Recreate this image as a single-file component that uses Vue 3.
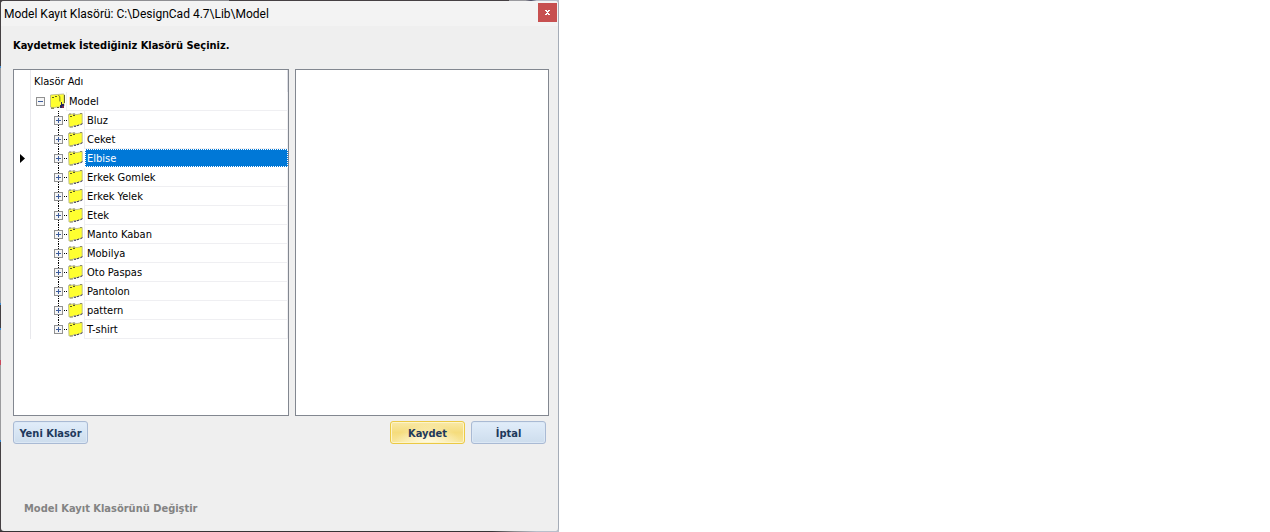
<script setup>
import { ref } from 'vue'

const folders = ['Bluz', 'Ceket', 'Elbise', 'Erkek Gomlek', 'Erkek Yelek', 'Etek', 'Manto Kaban', 'Mobilya', 'Oto Paspas', 'Pantolon', 'pattern', 'T-shirt']
const selected = ref('Elbise')
</script>

<template>
  <main class="frame">
    <section class="dialog" role="dialog" aria-labelledby="title">
      <header class="titlebar">
        <h1 id="title">Model Kayıt Klasörü: C:\DesignCad 4.7\Lib\Model</h1>
        <button class="close" type="button" aria-label="Kapat">
          <svg width="5" height="5" viewBox="0 0 5 5" shape-rendering="crispEdges">
            <path d="M0 0h2v1H0zM3 0h2v1H3zM1 1h3v1H1zM2 2h1v1H2zM1 3h3v1H1zM0 4h2v1H0zM3 4h2v1H3z" fill="#fff" />
          </svg>
        </button>
      </header>

      <div class="content">
        <h2>Kaydetmek İstediğiniz Klasörü Seçiniz.</h2>

        <div class="panels">
          <div class="panel">
            <div class="column-head">Klasör Adı</div>
            <ul class="tree" role="tree" aria-label="Klasör Adı">
              <li class="row root" role="treeitem" aria-expanded="true">
                <span class="gutter"></span>
                <button class="toggle" type="button" aria-label="Model daralt">
                  <svg width="9" height="9" viewBox="0 0 9 9" shape-rendering="crispEdges">
                    <rect x=".5" y=".5" width="8" height="8" fill="#f6f6f6" stroke="#919191" />
                    <path d="M2 4.5h5" stroke="#3c5c9c" />
                  </svg>
                </button>
                <svg class="folder" width="16" height="16" viewBox="0 0 16 16">
                  <path d="M.5 2L7 1.5L14 1V13L11 14H7L3 15L.5 14Z" fill="#ffff30" stroke="#b4b48c" stroke-width=".8" />
                  <path d="M2 4.5h2M5 3.5h2M1 15.2h3M7 14.5h2" stroke="#5d5d20" />
                  <path d="M8.5 2.5c2 0 1 4 1.5 6M14.5 2v8" fill="none" stroke="#66662c" />
                  <path d="M11 9h1v2h2v4h-4v-3h1z" fill="#26245e" />
                  <path d="M12 13h2v2h-2z" fill="#7a2a50" />
                </svg>
                <span class="name">Model</span>
              </li>
              <li
                v-for="folder in folders"
                :key="folder"
                class="row child"
                :class="{ selected: folder === selected }"
                role="treeitem"
                aria-expanded="false"
                :aria-selected="folder === selected"
                @click="selected = folder"
              >
                <span class="gutter">
                  <svg v-if="folder === selected" width="5" height="9" viewBox="0 0 5 9">
                    <path d="M0 0L5 4.5L0 9Z" fill="#000" />
                  </svg>
                </span>
                <span class="branch">
                  <button class="toggle" type="button" :aria-label="folder + ' genişlet'">
                    <svg width="9" height="9" viewBox="0 0 9 9" shape-rendering="crispEdges">
                      <rect x=".5" y=".5" width="8" height="8" fill="#f6f6f6" stroke="#919191" />
                      <path d="M2 4.5h5M4.5 2v5" stroke="#3c5c9c" />
                    </svg>
                  </button>
                </span>
                <svg class="folder" width="16" height="16" viewBox="0 0 16 16">
                  <path d="M.5 2.5L4 2L9 2.5L14.2 1.5V11.5L10 13.5L6 13.8L3 15H1Z" fill="#ffff30" stroke="#b0b088" stroke-width=".8" />
                  <path d="M2 4.5h2M5 3.5h2" stroke="#5d5d20" />
                  <path d="M1 2h2M5 2h2M12 1.5h2M2 15h3" stroke="#8a8a70" />
                  <path d="M6 14.3h2M9 13.8l2-.8M12.5 12.7l2-1" stroke="#343258" />
                </svg>
                <span class="name">{{ folder }}</span>
              </li>
            </ul>
          </div>
          <div class="panel"></div>
        </div>

        <div class="actions">
          <button class="action" type="button">Yeni Klasör</button>
          <button class="action primary" type="button">Kaydet</button>
          <button class="action" type="button">İptal</button>
        </div>

        <p class="note">Model Kayıt Klasörünü Değiştir</p>
      </div>
    </section>
  </main>
</template>

<style>
body {
  background: #fff;
}
</style>

<style scoped>
* {
  box-sizing: border-box;
}

.frame {
  width: 100%;
  max-width: 559px;
  min-height: 100vh;
  display: flex;
  padding: 1px 0 1px 1px;
  background:
    linear-gradient(90deg, #454043 9%, #8e8e92 9% 41%, #454043 41% 91%, #9a9a9e 91% 94%, #4a4a62 95%, #b8bfcb 96%) 0 0 / 100% 1px no-repeat,
    linear-gradient(90deg, #373336 88%, #8a898c 92%, #b8bfcb 96%) 0 100% / 100% 1px no-repeat,
    linear-gradient(#454043 66px, #3c8ad0 66px 68px, #9b9b9d 68px 303px, #3c8ad0 303px 305px, #454043 305px 328px, #3c8ad0 328px 330px, #9b9b9d 330px 360px, #c9485c 360px 365px, #9b9b9d 365px 440px, #3c8ad0 440px 442px, #454043 442px) 0 0 / 6px 100% no-repeat,
    #b8bfcb;
  font: 11px/14px "DejaVu Sans Condensed", "DejaVu Sans", sans-serif;
  color: #000;
}

.dialog {
  flex: 1;
  min-width: 0;
  display: flex;
  flex-direction: column;
  background: #efefef;
  border-right: 1px solid #a5acb7;
  border-radius: 3px;
}

.titlebar {
  height: 25px;
  display: flex;
  justify-content: space-between;
  align-items: flex-start;
  padding: 2px 1px 0 3px;
  background: #f3f3f3;
  border-radius: 3px 3px 0 0;
}

h1 {
  margin: 0;
  font: 12px/22px Roboto, "Open Sans", sans-serif;
  white-space: nowrap;
}

button {
  margin: 0;
  padding: 0;
  border: 0;
  font: inherit;
}

.close {
  width: 19px;
  height: 19px;
  display: grid;
  place-items: center;
  background: #c75050;
}

.content {
  flex: 1;
  padding: 13px 9px 15px 12px;
  display: flex;
  flex-direction: column;
}

h2 {
  margin: 0 0 16px;
  font-size: 11px;
  line-height: 14px;
  font-weight: bold;
}

.panels {
  display: grid;
  grid-template-columns: 276fr 254fr;
  gap: 6px;
  min-height: 347px;
}

.panel {
  border: 1px solid #828790;
  background: #fff;
  min-width: 0;
}

.column-head {
  height: 22px;
  margin-left: 16px;
  padding-left: 3px;
  border-left: 1px solid #e8e8ec;
  border-right: 1px solid #dcdde4;
  line-height: 24px;
}

.tree {
  list-style: none;
  margin: 0;
  padding: 0;
}

.row {
  display: flex;
  height: 19px;
}

.gutter {
  width: 17px;
  flex: none;
  border-right: 1px solid #e8e8ec;
  display: flex;
  align-items: center;
  padding-left: 6px;
}

.toggle {
  width: 9px;
  height: 9px;
  flex: none;
  display: block;
  background: none;
}

.toggle svg {
  display: block;
}

.root .toggle {
  margin: 5px 4px 5px 5px;
}

.branch {
  width: 13px;
  flex: none;
  margin-left: 23px;
  padding-top: 5px;
  background:
    repeating-linear-gradient(180deg, #000 0 1px, transparent 1px 2px) 4px 0 / 1px 100% no-repeat,
    repeating-linear-gradient(90deg, #000 0 1px, transparent 1px 2px) 10px 9px / 3px 1px no-repeat;
}

.row:last-child .branch {
  background-size: 1px 10px, 3px 1px;
}

.folder {
  flex: none;
  margin: 1px 0 0 1px;
}

.name {
  flex: 1;
  padding-left: 2px;
  border: solid #efeff2;
  border-width: 0 1px 1px;
  line-height: 20px;
  white-space: nowrap;
}

.selected .name {
  margin: 0 0 1px 1px;
  padding-left: 1px;
  background: #0078d7;
  color: #fff;
  border: 1px dotted #fff;
  line-height: 18px;
}

.actions {
  display: flex;
  gap: 6px;
  margin-top: 5px;
  padding-right: 3px;
}

.action {
  width: 75px;
  height: 23px;
  padding-top: 2px;
  border: 1px solid #a9bad4;
  border-radius: 3px;
  background: linear-gradient(#e1edfa, #cddded);
  box-shadow: inset 0 0 0 1px #dce8f5;
  color: #1e395b;
  font-weight: bold;
}

.action:first-child {
  margin-right: auto;
}

.primary {
  border-color: #ebc944;
  background: radial-gradient(ellipse at 50% 110%, #fffbe4 5%, rgba(255, 247, 202, 0) 65%), linear-gradient(#f9e9a7, #f5dc7c 50%, #f8e79f);
  box-shadow: inset 0 0 0 1px #fdf4c9;
}

.note {
  margin: auto 0 0 11px;
  color: #838383;
  font-weight: bold;
}
</style>
